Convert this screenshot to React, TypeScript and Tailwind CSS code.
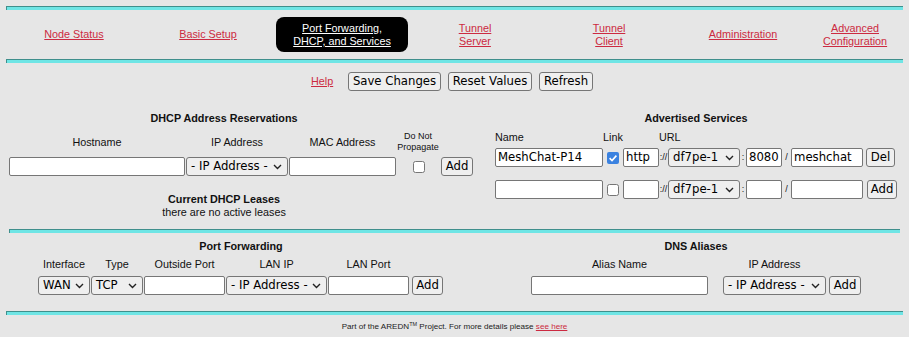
import React from "react";

function Hr({ cls }: { cls: string }) {
  return <div className={`h-[4px] bg-[#6fe5e5] border-t border-l border-[#3f8f8c] ${cls}`} />;
}

function Chevron() {
  return (
    <svg width="9" height="6" viewBox="0 0 9 6" className="shrink-0">
      <path d="M1 1 L4.5 4.5 L8 1" fill="none" stroke="#222" strokeWidth="1.4" />
    </svg>
  );
}

function Sel({ cls, text }: { cls: string; text: string }) {
  return (
    <div
      className={`h-[19px] flex items-center justify-between pl-[4px] pr-[5px] bg-[#efefef] border border-[#767676] rounded-[3px] font-['DejaVu_Sans',sans-serif] text-[11.7px] text-black whitespace-nowrap ${cls}`}
    >
      <span>{text}</span>
      <Chevron />
    </div>
  );
}

function Inp({ cls, value }: { cls: string; value?: string }) {
  return (
    <div
      className={`h-[19px] flex items-center px-[2px] bg-white border border-[#767676] rounded-[2px] font-['DejaVu_Sans',sans-serif] text-[11.7px] text-black whitespace-nowrap overflow-hidden ${cls}`}
    >
      {value ?? ""}
    </div>
  );
}

function Btn({ cls, text }: { cls: string; text: string }) {
  return (
    <div
      className={`h-[19px] flex items-center justify-center bg-[#efefef] border border-[#767676] rounded-[3px] font-['DejaVu_Sans',sans-serif] text-[11.7px] text-black whitespace-nowrap ${cls}`}
    >
      {text}
    </div>
  );
}

function Check({ checked }: { checked?: boolean }) {
  return checked ? (
    <svg width="12" height="12" viewBox="0 0 12 12" className="shrink-0">
      <rect x="0" y="0" width="12" height="12" rx="2" fill="#3b82e0" />
      <path d="M2.6 6.2 L5 8.5 L9.4 3.6" fill="none" stroke="white" strokeWidth="1.6" />
    </svg>
  ) : (
    <svg width="12" height="12" viewBox="0 0 12 12" className="shrink-0">
      <rect x="0.5" y="0.5" width="11" height="11" rx="2" fill="white" stroke="#767676" />
    </svg>
  );
}

const link = "text-[10.8px] leading-[13px] text-[#cc2a41] underline text-center";

export default function App() {
  return (
    <div className="w-[909px] h-[337px] bg-[#e6e6e6] pt-[6px] font-['Liberation_Sans',Arial,sans-serif] text-[#111] overflow-hidden">
      <Hr cls="mx-[6px]" />
      {/* nav */}
      <div className="h-[49px] flex items-center pl-[7px]">
        <div className="w-[134px] flex justify-center"><span className={link}>Node Status</span></div>
        <div className="w-[134px] flex justify-center"><span className={link}>Basic Setup</span></div>
        <div className="w-[134px] flex justify-center">
          <div className="w-[132px] h-[35px] rounded-[8px] bg-black flex flex-col items-center justify-center text-white text-[10.8px] leading-[13px] underline">
            <span>Port Forwarding,</span>
            <span>DHCP, and Services</span>
          </div>
        </div>
        <div className="w-[132px] flex justify-center"><span className={link}>Tunnel<br />Server</span></div>
        <div className="w-[136px] flex justify-center"><span className={link}>Tunnel<br />Client</span></div>
        <div className="w-[132px] flex justify-center"><span className={link}>Administration</span></div>
        <div className="w-[92px] flex justify-center"><span className={link}>Advanced<br />Configuration</span></div>
      </div>
      <Hr cls="mx-[6px]" />
      {/* buttons */}
      <div className="mt-[9px] flex items-center pl-[311px]">
        <span className="text-[10.8px] leading-[13px] text-[#cc2a41] underline w-[21px]">Help</span>
        <Btn cls="ml-[16px] w-[93px]" text="Save Changes" />
        <Btn cls="ml-[7px] w-[84px]" text="Reset Values" />
        <Btn cls="ml-[7px] w-[54px]" text="Refresh" />
      </div>
      {/* two columns */}
      <div className="flex items-start h-[129px]">
        {/* left */}
        <div className="w-[482px] pt-[21px] pl-[9px]">
          <div className="w-[430px] text-center font-bold text-[10.8px] leading-[13px]">DHCP Address Reservations</div>
          <div className="mt-[6px] h-[22px] flex items-center text-[10.8px] leading-[13px] text-center">
            <div className="w-[176px]">Hostname</div>
            <div className="w-[102px] ml-[1px]">IP Address</div>
            <div className="w-[107px] ml-[1px]">MAC Address</div>
            <div className="w-[42px] ml-[1px] text-[9px] leading-[11px]">Do Not<br />Propagate</div>
          </div>
          <div className="mt-[4px] flex items-center">
            <Inp cls="w-[176px]" />
            <Sel cls="w-[102px] ml-[1px]" text="- IP Address -" />
            <Inp cls="w-[107px] ml-[1px]" />
            <div className="w-[42px] ml-[1px] flex justify-center pl-[2px]"><Check /></div>
            <Btn cls="w-[32px] ml-[2px]" text="Add" />
          </div>
          <div className="mt-[17px] w-[430px] text-center text-[10.8px] leading-[13px]">
            <div className="font-bold">Current DHCP Leases</div>
            <div>there are no active leases</div>
          </div>
        </div>
        {/* right */}
        <div className="w-[427px] pt-[21px] pl-[13px]">
          <div className="w-[402px] text-center font-bold text-[10.8px] leading-[13px]">Advertised Services</div>
          <div className="mt-[6px] flex text-[10.8px] leading-[13px]">
            <div className="w-[108px]">Name</div>
            <div className="w-[56px]">Link</div>
            <div>URL</div>
          </div>
          <div className="mt-[4px] flex items-center text-[9px]">
            <Inp cls="w-[108px]" value="MeshChat-P14" />
            <div className="ml-[4px]"><Check checked /></div>
            <Inp cls="w-[36px] ml-[4px]" value="http" />
            <div className="w-[9px] text-center">://</div>
            <Sel cls="w-[72px]" text="df7pe-1" />
            <div className="w-[6px] text-center">:</div>
            <Inp cls="w-[36px]" value="8080" />
            <div className="w-[9px] text-center">/</div>
            <Inp cls="w-[72px]" value="meshchat" />
            <Btn cls="w-[29px] ml-[3px]" text="Del" />
          </div>
          <div className="mt-[13px] flex items-center text-[9px]">
            <Inp cls="w-[108px]" />
            <div className="ml-[4px]"><Check /></div>
            <Inp cls="w-[36px] ml-[4px]" />
            <div className="w-[9px] text-center">://</div>
            <Sel cls="w-[72px]" text="df7pe-1" />
            <div className="w-[6px] text-center">:</div>
            <Inp cls="w-[36px]" />
            <div className="w-[9px] text-center">/</div>
            <Inp cls="w-[72px]" />
            <Btn cls="w-[30px] ml-[4px]" text="Add" />
          </div>
        </div>
      </div>
      <Hr cls="mt-[9px] mx-[9px]" />
      {/* bottom */}
      <div className="flex items-start h-[78px]">
        <div className="w-[482px] pt-[7px]">
          <div className="text-center font-bold text-[10.8px] leading-[13px]">Port Forwarding</div>
          <div className="mt-[5px] pl-[38px] flex text-[10.8px] leading-[13px] text-center">
            <div className="w-[52px]">Interface</div>
            <div className="w-[52px] ml-[1px]">Type</div>
            <div className="w-[81px] ml-[1px]">Outside Port</div>
            <div className="w-[101px] ml-[1px]">LAN IP</div>
            <div className="w-[81px] ml-[1px]">LAN Port</div>
          </div>
          <div className="mt-[5px] pl-[38px] flex items-center">
            <Sel cls="w-[52px]" text="WAN" />
            <Sel cls="w-[52px] ml-[1px]" text="TCP" />
            <Inp cls="w-[81px] ml-[1px]" />
            <Sel cls="w-[101px] ml-[1px]" text="- IP Address -" />
            <Inp cls="w-[81px] ml-[1px]" />
            <Btn cls="w-[31px] ml-[3px]" text="Add" />
          </div>
        </div>
        <div className="w-[427px] pt-[7px] pl-[49px]">
          <div className="w-[330px] text-center font-bold text-[10.8px] leading-[13px]">DNS Aliases</div>
          <div className="mt-[5px] flex text-[10.8px] leading-[13px] text-center">
            <div className="w-[177px]">Alias Name</div>
            <div className="w-[103px] ml-[15px]">IP Address</div>
          </div>
          <div className="mt-[5px] flex items-center">
            <Inp cls="w-[177px]" />
            <Sel cls="w-[103px] ml-[15px]" text="- IP Address -" />
            <Btn cls="w-[32px] ml-[3px]" text="Add" />
          </div>
        </div>
      </div>
      <Hr cls="mx-[6px]" />
      <div className="mt-[7px] text-center text-[8.1px] leading-[10px] text-[#222]">
        Part of the AREDN<sup className="text-[5.5px]">TM</sup> Project. For more details please{" "}
        <span className="text-[#cc2a41] underline">see here</span>
      </div>
    </div>
  );
}
